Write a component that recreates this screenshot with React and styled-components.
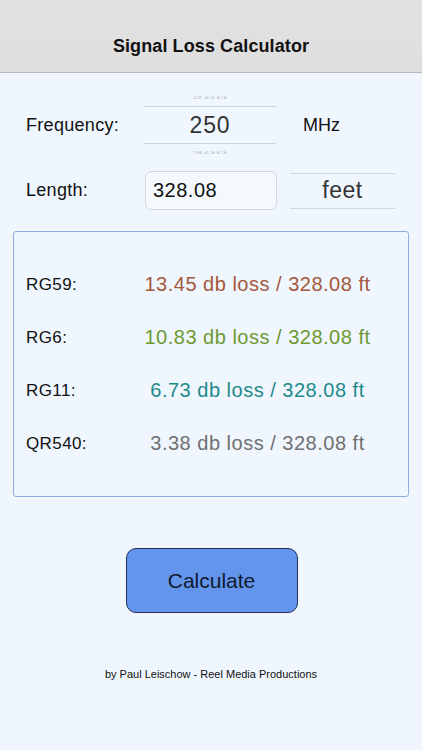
import React from 'react';
import styled, { createGlobalStyle } from 'styled-components';

const GlobalStyle = createGlobalStyle`
  html, body {
    margin: 0;
    padding: 0;
    background: #eff6fe;
    font-family: "Liberation Sans", Arial, sans-serif;
  }
  #root {
    min-height: 750px;
  }
`;

const results = [
  { name: 'RG59:', loss: '13.45', color: '#a5583a' },
  { name: 'RG6:', loss: '10.83', color: '#6e9a33' },
  { name: 'RG11:', loss: '6.73', color: '#1f8a8a' },
  { name: 'QR540:', loss: '3.38', color: '#707070' },
];

export default function App() {
  return (
    <Screen>
      <GlobalStyle />
      <NavBar>
        <NavTitle>Signal Loss Calculator</NavTitle>
      </NavBar>

      <Content>
        {/* Frequency picker row */}
        <FreqRow>
          <Label>Frequency:</Label>
          <Picker>
            <Ghost $pos="top">200</Ghost>
            <Selected>250</Selected>
            <Ghost $pos="bottom">300</Ghost>
          </Picker>
          <Unit>MHz</Unit>
        </FreqRow>

        {/* Length row */}
        <LengthRow>
          <Label>Length:</Label>
          <Input defaultValue="328.08" />
          <UnitPicker>feet</UnitPicker>
        </LengthRow>

        {/* Results */}
        <ResultsBox>
          {results.map((r) => (
            <ResultRow key={r.name}>
              <ResultLabel>{r.name}</ResultLabel>
              <ResultValue $color={r.color}>
                {r.loss} db loss / 328.08 ft
              </ResultValue>
            </ResultRow>
          ))}
        </ResultsBox>

        <ButtonWrap>
          <CalcButton>Calculate</CalcButton>
        </ButtonWrap>

        <Footer>by Paul Leischow - Reel Media Productions</Footer>
      </Content>
    </Screen>
  );
}

// Screen

const Screen = styled.div`
  width: 422px;
  min-height: 750px;
  background: #eff6fe;
  color: #111;
`;

// Nav bar

const NavBar = styled.header`
  height: 72px;
  display: flex;
  align-items: flex-end;
  justify-content: center;
  background: linear-gradient(#e2e2e2, #dedede);
  border-bottom: 1px solid #b8b8b8;
`;

const NavTitle = styled.h1`
  margin: 0 0 15px;
  font-size: 18px;
  font-weight: 700;
  line-height: 22px;
  color: #111;
  letter-spacing: 0.1px;
`;

// Content

const Content = styled.main`
  padding: 0 13px;
`;

const FreqRow = styled.div`
  display: flex;
  align-items: center;
  margin-top: 14px;
  padding-left: 13px;
`;

const Label = styled.div`
  width: 118px;
  flex-shrink: 0;
  font-size: 18px;
  letter-spacing: 0.3px;
  color: #111;
`;

const Picker = styled.div`
  width: 132px;
  display: flex;
  flex-direction: column;
  align-items: center;
`;

// rows of the wheel above / below the selection, squashed by perspective
const Ghost = styled.div`
  height: 22px;
  width: 100%;
  text-align: center;
  font-size: 20px;
  line-height: 22px;
  letter-spacing: 1px;
  color: #c2c7cd;
  transform: scaleY(0.2);
  margin: ${(p) => (p.$pos === 'top' ? '0 0 -3px' : '-2px 0 0')};
`;

const Selected = styled.div`
  width: 100%;
  height: 36px;
  border-top: 1px solid #cfd3d8;
  border-bottom: 1px solid #cfd3d8;
  display: flex;
  align-items: center;
  justify-content: center;
  font-size: 23px;
  letter-spacing: 0.8px;
  color: #333;
`;

const Unit = styled.div`
  margin-left: 27px;
  font-size: 18px;
  color: #111;
`;

const LengthRow = styled.div`
  display: flex;
  align-items: center;
  height: 39px;
  margin-top: 7px;
  padding-left: 13px;
`;

const Input = styled.input`
  box-sizing: border-box;
  width: 132px;
  height: 39px;
  margin-left: 1px;
  padding: 0 7px;
  border: 1px solid #d3d7dc;
  border-radius: 6px;
  background: #f4f9fe;
  font-family: "Liberation Sans", Arial, sans-serif;
  font-size: 20px;
  letter-spacing: 0.5px;
  color: #111;
  outline: none;
`;

const UnitPicker = styled.div`
  box-sizing: border-box;
  width: 105px;
  height: 36px;
  margin-left: 13px;
  border-top: 1px solid #d3d7dc;
  border-bottom: 1px solid #d3d7dc;
  display: flex;
  align-items: center;
  justify-content: center;
  font-size: 23px;
  letter-spacing: 0.5px;
  color: #333;
`;

// Results box

const ResultsBox = styled.section`
  box-sizing: border-box;
  height: 266px;
  margin-top: 21px;
  padding: 26px 12px 0;
  border: 1px solid #8eaee0;
  border-radius: 3px;
`;

const ResultRow = styled.div`
  display: grid;
  grid-template-columns: 93px 1fr;
  align-items: center;
  height: 53px;
`;

const ResultLabel = styled.div`
  font-size: 17px;
  letter-spacing: 0.4px;
  color: #111;
`;

const ResultValue = styled.div`
  text-align: center;
  font-size: 20px;
  letter-spacing: 0.5px;
  color: ${(p) => p.$color};
`;

// Button

const ButtonWrap = styled.div`
  display: flex;
  justify-content: center;
  margin-top: 51px;
`;

const CalcButton = styled.button`
  width: 172px;
  height: 65px;
  margin-left: 1px;
  border: 1px solid #26324d;
  border-radius: 10px;
  background: #6495ed;
  font-family: "Liberation Sans", Arial, sans-serif;
  font-size: 21px;
  color: #111a2e;
  cursor: pointer;
`;

const Footer = styled.footer`
  margin-top: 54px;
  text-align: center;
  font-size: 11px;
  line-height: 14px;
  color: #111;
`;
